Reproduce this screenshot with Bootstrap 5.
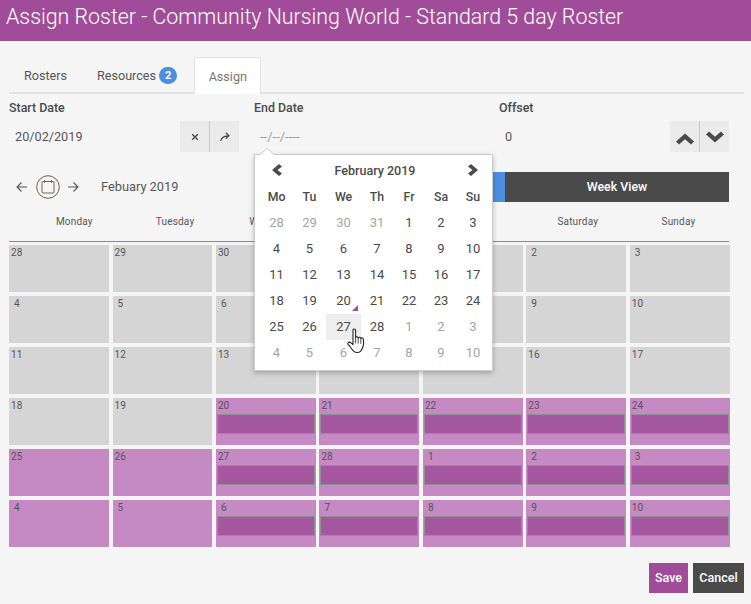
<!DOCTYPE html>
<html lang="en">
<head>
  <meta charset="UTF-8">
  <title>Assign Roster</title>
  <meta name="viewport" content="width=device-width, initial-scale=1">
  <link href="https://cdn.jsdelivr.net/npm/bootstrap@5.3.3/dist/css/bootstrap.min.css" rel="stylesheet">
  <style>
    html, body { height: 100%; }
    body { background: #f5f5f5; font-family: Roboto, "Liberation Sans", sans-serif; font-size: 13px; color: #4a4a4a; overflow: hidden; }
    .page-head { background: #a04c98; color: #fff; height: 41px; padding-left: 6px; font-size: 21.35px; font-weight: 300; line-height: 34px; }
    .page-main { padding: 16px 7px 0 9px; position: relative; }

    .tabs-row { height: 37px; border-bottom: 2px solid #e2e2e2; padding-left: 0; flex-wrap: nowrap; }
    .tabs-row .nav-link { color: #555; font-size: 12.6px; border: 0; border-radius: 0; padding: 0; height: 35px; line-height: 37px; background: transparent; }
    .tab-rosters { margin-left: 15px; margin-right: 30px; }
    .tab-res { margin-right: 17px; }
    .tabs-row .nav-link.active { width: 67px; height: 37px; text-align: center; background: #fff; color: #777; border: 1px solid #e2e2e2; border-bottom: 0; }
    .res-count { background: #4a8fe0; font-size: 11px; font-weight: 700; padding: 2px 6px; border-radius: 9px; line-height: 13px; margin-left: 3px; display: inline-block; vertical-align: 1px; }

    .field-row { width: 720px; gap: 15px; margin-top: 7px; }
    .field { width: 230px; }
    .field-label { font-weight: 500; font-size: 12.4px; line-height: 14px; display: block; color: #4a4a4a; }
    .field-box { height: 31px; margin-top: 6px; display: flex; align-items: center; justify-content: space-between; padding-left: 6px; }
    .field-val { font-size: 12.7px; color: #555; }
    .field-ph { color: #999; font-size: 13px; }
    .box-btns { display: flex; height: 31px; }
    .box-btn { width: 29px; height: 31px; background: #ebebeb; display: flex; align-items: center; justify-content: center; padding: 0; border: 0; border-radius: 0; }
    .box-btn + .box-btn { width: 30px; border-left: 1px solid #c8c8c8; }

    .cal-bar { height: 30px; margin-top: 20px; width: 720px; }
    .cal-arrow { width: 11px; height: 12px; display: block; flex: none; }
    .cal-back { margin-left: 7px; }
    .cal-icon { margin: 0 8px 0 9px; width: 24px; height: 24px; display: block; flex: none; }
    .cal-month { font-size: 12.8px; margin-left: 22px; color: #555; }
    .view-btns { margin-left: auto; width: 448px; height: 30px; display: flex; }
    .view-btn { width: 50%; border: 0; border-radius: 0; color: #fff; font-size: 12.4px; font-weight: 500; padding: 0; }
    .view-month { background: #4a8fe0; }
    .view-week { background: #4a4a4a; }

    .day-heads { display: grid; grid-template-columns: repeat(7, 100.7px); padding-left: 15px; width: 720px; height: 40px; border-bottom: 1px solid #8a8a8a; text-align: center; font-size: 10px; line-height: 40px; color: #555; letter-spacing: .2px; }
    .month-grid { display: grid; grid-template-columns: repeat(7, 99.86px); column-gap: 3.6px; row-gap: 4px; margin: 3px 0 0 .1px; width: 721px; }
    .day-cell { height: 47px; background: #d5d5d5; font-size: 10px; line-height: 12px; color: #555; padding: 2px 0 0 2px; position: relative; }
    .day-cell.pad { padding-left: 5px; }
    .day-cell.on { background: #c589c3; }
    .shift-bar { position: absolute; left: 1px; right: 1px; top: 16px; height: 20px; background: #a5589f; border: 1px solid #909090; }

    .foot-btns { position: absolute; top: 522px; right: 7px; gap: 5px; }
    .foot-btn { height: 30px; border: 0; border-radius: 0; color: #fff; font-size: 12.5px; font-weight: 500; padding: 0; }
    .foot-save { width: 39px; background: #a04c98; }
    .foot-cancel { width: 51px; background: #4a4a4a; }

    .picker { position: absolute; left: 254px; top: 113px; width: 239px; height: 217px; background: #fff; border: 1px solid #ccc; box-shadow: 0 2px 5px rgba(0,0,0,.25); padding: 0 0 0 5px; }
    .picker::before { content: ""; position: absolute; left: 5px; top: -6px; width: 0; height: 0; border-left: 7px solid transparent; border-right: 7px solid transparent; border-bottom: 6px solid #fff; filter: drop-shadow(0 -1px 0 #ccc); }
    .pick-head { height: 29px; display: flex; align-items: center; justify-content: space-between; padding: 0 14px 0 12px; font-size: 12.5px; font-weight: 500; }
    .pick-head span { padding-top: 3px; }
    .pick-grid { display: grid; grid-template-columns: 33px 33px 35px 32px 32px 32px 32px; grid-auto-rows: 26px; text-align: center; line-height: 26px; font-size: 13px; color: #4a4a4a; }
    .pick-wd { font-weight: 500; font-size: 12.3px; }
    .pick-day { position: relative; }
    .pick-day.off { color: #a5a5a5; }
    .pick-day.hov { background: #eee; }
    .pick-day.today::after { content: ""; position: absolute; right: 3px; bottom: 3px; border-left: 6px solid transparent; border-bottom: 6px solid #a04c98; }
    .hand { position: absolute; left: 92px; top: 173px; width: 20px; height: 26px; }
  </style>
</head>
<body>
  <div class="page-head">Assign Roster - Community Nursing World - Standard 5 day Roster</div>

  <div class="page-main">
    <ul class="nav tabs-row">
      <li class="nav-item"><a class="nav-link tab-rosters" href="#">Rosters</a></li>
      <li class="nav-item"><a class="nav-link tab-res" href="#">Resources<span class="badge res-count">2</span></a></li>
      <li class="nav-item"><a class="nav-link active" href="#">Assign</a></li>
    </ul>

    <div class="d-flex field-row">
      <div class="field">
        <span class="field-label">Start Date</span>
        <div class="field-box">
          <span class="field-val">20/02/2019</span>
          <div class="box-btns">
            <button class="box-btn" type="button"><svg width="8" height="8" viewBox="0 0 8 8"><path d="M1.200 1.200l5.600 5.600M6.800 1.200L1.200 6.800" stroke="#444" stroke-width="1.300" fill="none"/></svg></button>
            <button class="box-btn" type="button"><svg width="10" height="10" viewBox="0 0 10 10"><path d="M.8 9C1.200 5.800 3.500 4 8.500 3.800M5.800 .8L8.900 3.800 5.800 6.600" stroke="#444" stroke-width="1.200" fill="none"/></svg></button>
          </div>
        </div>
      </div>
      <div class="field">
        <span class="field-label">End Date</span>
        <div class="field-box"><span class="field-ph">--/--/----</span></div>
      </div>
      <div class="field">
        <span class="field-label">Offset</span>
        <div class="field-box">
          <span class="field-val">0</span>
          <div class="box-btns">
            <button class="box-btn" type="button"><svg class="mt-1" width="18" height="12" viewBox="0 0 18 12"><path d="M0 8.500L9 .5l9 8-3 3-6-5.300-6 5.300z" fill="#4a4a4a"/></svg></button>
            <button class="box-btn" type="button"><svg width="18" height="12" viewBox="0 0 18 12"><path d="M0 3.500l9 8 9-8-3-3-6 5.300L3 .5z" fill="#4a4a4a"/></svg></button>
          </div>
        </div>
      </div>
    </div>

    <div class="d-flex align-items-center cal-bar">
      <svg class="cal-arrow cal-back" viewBox="0 0 11 12"><path d="M11 6H1.200M5.500 1.500L1 6l4.500 4.500" stroke="#555" stroke-width="1.100" fill="none"/></svg>
      <svg class="cal-icon" viewBox="0 0 24 24"><circle cx="12" cy="12" r="11.300" fill="none" stroke="#7a5a45" stroke-width="1"/><rect x="6" y="6.500" width="12" height="11.500" rx="1" fill="none" stroke="#666" stroke-width="1"/><path d="M8.500 5v3M15.500 5v3" stroke="#666" stroke-width="1"/></svg>
      <svg class="cal-arrow" viewBox="0 0 11 12"><path d="M0 6h9.800M5.500 1.500L10 6l-4.500 4.500" stroke="#555" stroke-width="1.100" fill="none"/></svg>
      <span class="cal-month">Febuary 2019</span>
      <div class="view-btns">
        <button class="btn view-btn view-month" type="button">Month View</button>
        <button class="btn view-btn view-week" type="button">Week View</button>
      </div>
    </div>

    <div class="day-heads" id="dayHeads"></div>
    <div class="month-grid" id="monthGrid"></div>

    <div class="d-flex foot-btns">
      <button class="btn foot-btn foot-save" type="button">Save</button>
      <button class="btn foot-btn foot-cancel" type="button">Cancel</button>
    </div>

    <div class="picker">
      <div class="pick-head">
        <svg width="10" height="12" viewBox="0 0 10 12"><path d="M7 0L0 6l7 6 3-2.500L5.500 6 10 2.500z" fill="#4a4a4a"/></svg>
        <span>February 2019</span>
        <svg width="10" height="12" viewBox="0 0 10 12"><path d="M3 0l7 6-7 6-3-2.500L4.500 6 0 2.500z" fill="#4a4a4a"/></svg>
      </div>
      <div class="pick-grid" id="pickGrid"></div>
      <svg class="hand" viewBox="0 0 20 26"><path d="M6 2.200c0-1.700 2.600-1.700 2.600 0v7.300c.3-1 2.400-1 2.600.4.4-1 2.400-.9 2.600.5.5-.8 2.500-.6 2.600.9.4 3 .3 5.800-.6 8-.7 1.800-1.500 3-2.300 4-1.800 1.700-5 1.600-6.600.1-1.800-1.700-3.300-4-4.700-6C1.200 17.100.6 15.800 1 15c.6-1.200 2-1.100 3-.2l2 1.900z" fill="#fff" stroke="#222" stroke-width="1.100" stroke-linejoin="round"/><path d="M8.600 10v5.500M11.200 10v5.500M13.800 11v4.800" stroke="#222" stroke-width=".8" fill="none"/></svg>
    </div>
  </div>

  <script>
    // calendar cells, one entry per visible day
    const dayNames = ["Monday", "Tuesday", "Wednesday", "Thursday", "Friday", "Saturday", "Sunday"];
    document.getElementById("dayHeads").innerHTML = dayNames.map(d => `<div>${d}</div>`).join("");

    const days = [28,29,30,31,1,2,3, 4,5,6,7,8,9,10, 11,12,13,14,15,16,17, 18,19,20,21,22,23,24, 25,26,27,28,1,2,3, 4,5,6,7,8,9,10];
    let html = "";
    days.forEach((d, i) => {
      const col = i % 7;
      const on = i >= 23;
      const bar = on && !(i >= 28 && col < 2);
      html += `<div class="day-cell${d < 10 ? " pad" : ""}${on ? " on" : ""}">${d}${bar ? '<div class="shift-bar"></div>' : ""}</div>`;
    });
    document.getElementById("monthGrid").innerHTML = html;

    let pick = ["Mo","Tu","We","Th","Fr","Sa","Su"].map(d => `<div class="pick-wd">${d}</div>`).join("");
    days.forEach((d, i) => {
      let cls = "pick-day";
      if (i < 4 || i >= 32) cls += " off";
      if (i === 23) cls += " today";
      if (i === 30) cls += " hov";
      pick += `<div class="${cls}">${d}</div>`;
    });
    document.getElementById("pickGrid").innerHTML = pick;
  </script>
  <script src="https://cdn.jsdelivr.net/npm/bootstrap@5.3.3/dist/js/bootstrap.bundle.min.js"></script>
</body>
</html>
